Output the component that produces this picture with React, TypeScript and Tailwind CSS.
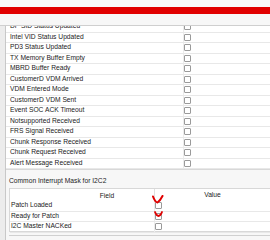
import React from "react";

const rows = [
  "DP SID Status Updated",
  "Intel VID Status Updated",
  "PD3 Status Updated",
  "TX Memory Buffer Empty",
  "MBRD Buffer Ready",
  "CustomerD VDM Arrived",
  "VDM Entered Mode",
  "CustomerD VDM Sent",
  "Event SOC ACK Timeout",
  "Notsupported Received",
  "FRS Signal Received",
  "Chunk Response Received",
  "Chunk Request Received",
  "Alert Message Received",
];

function Box() {
  return <div className="w-[7px] h-[7px] border border-[#9a9a9a] rounded-[1px] bg-white" />;
}

function Check({ small }: { small?: boolean }) {
  return small ? (
    <svg className="absolute left-[-1px] top-[-2px]" width="9" height="6" viewBox="0 0 9 6">
      <path d="M1 1 Q2.5 5 4.5 5 Q6.5 5 8 1" fill="none" stroke="#e00000" strokeWidth="1.8" strokeLinecap="round" />
    </svg>
  ) : (
    <svg className="absolute left-[-3px] top-[-7px]" width="12" height="9" viewBox="0 0 12 9">
      <path d="M1 1.5 Q3 7 5.5 7.5 Q8 6 10.5 1" fill="none" stroke="#e00000" strokeWidth="2" strokeLinecap="round" />
    </svg>
  );
}

export default function App() {
  return (
    <div
      className="w-[270px] h-[240px] overflow-hidden bg-[#f7f7f7] flex flex-col text-[6.7px] text-[#222]"
      style={{ fontFamily: '"Liberation Sans", Arial, sans-serif' }}
    >
      <div className="h-[7px] bg-[#f9f9f9]" />
      <div className="h-[7px] bg-[#e10000]" />
      <div className="h-[12px] bg-[#f7f7f7] border-b border-[#cfcfcf]" />
      <div className="flex flex-1 min-h-0">
        <div className="w-[6px] bg-[#ececec] border-r border-[#c8c8c8]" />
        <div className="flex-1 flex flex-col bg-white">
          <div className="h-[144px] overflow-hidden border-b border-[#d8d8d8]">
            <div className="-mt-[4px]">
              {rows.map((r) => (
                <div key={r} className="h-[10.5px] flex items-center border-b border-[#e8e8e8]">
                  <div className="w-[177px] pl-[4px] leading-none whitespace-nowrap">{r}</div>
                  <div className="flex-1 h-full border-l border-[#ececec] flex items-center">
                    <Box />
                  </div>
                </div>
              ))}
            </div>
          </div>
          <div className="flex-1 bg-[#f7f7f7] pt-[8px] pl-[3px] flex flex-col">
            <div className="leading-none h-[7px] whitespace-nowrap">Common Interrupt Mask for I2C2</div>
            <div className="mt-[3px] h-[44px] border border-[#d8d8d8] border-r-0 bg-white">
              <div className="h-[12px] flex items-end pb-[1px]">
                <div className="w-[144px] pl-[50px] text-center leading-none">Field</div>
                <div className="flex-1 h-full border-l border-[#e0e0e0] text-center leading-none flex items-end justify-center pb-[1px]">Value</div>
              </div>
              {[
                ["Patch Loaded", 1],
                ["Ready for Patch", 2],
                ["I2C Master NACKed", 0],
              ].map(([t, c]) => (
                <div key={t as string} className="h-[10.5px] flex items-center border-b border-[#e8e8e8]">
                  <div className="w-[144px] pl-[1px] leading-none whitespace-nowrap">{t as string}</div>
                  <div className="flex-1 h-full border-l border-[#ececec] flex items-center">
                    <div className="relative">
                      <Box />
                      {c === 1 ? <Check /> : c === 2 ? <Check small /> : null}
                    </div>
                  </div>
                </div>
              ))}
            </div>
            <div className="mt-[3px] h-[1px] bg-[#d0d0d0]" />
          </div>
        </div>
      </div>
    </div>
  );
}
